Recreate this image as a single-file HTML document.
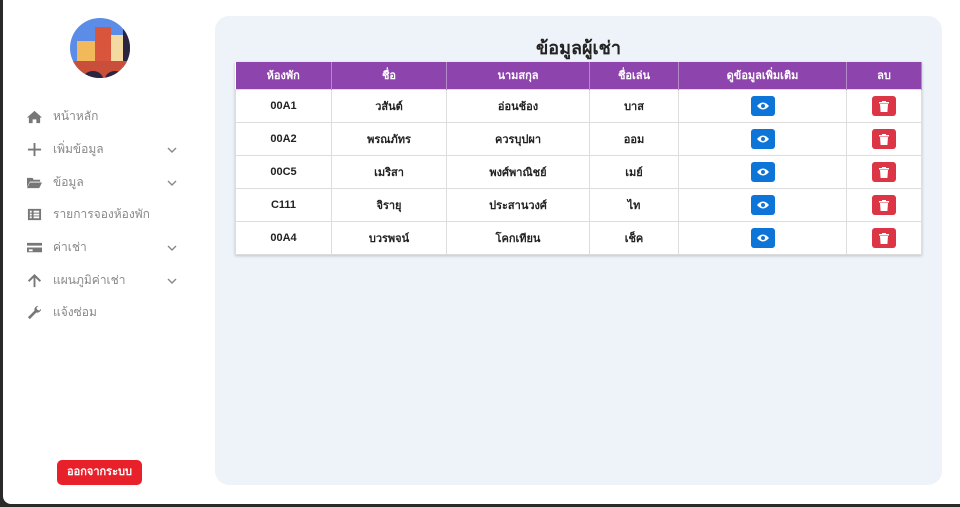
<!DOCTYPE html>
<html><head><meta charset="utf-8"><style>
*{box-sizing:border-box;margin:0;padding:0}
body{width:960px;height:507px;overflow:hidden;background:#2a2a2a;font-family:"Liberation Sans","Noto Sans CJK SC",sans-serif}
.frame{position:absolute;left:3px;top:0;width:957px;height:504px;background:#fff;border-bottom-left-radius:8px}
.item{position:absolute;left:24px;height:20px;display:flex;align-items:center;color:#888;font-size:12px}
.item svg{width:15px;height:15px;fill:#777;margin-right:11px}
.chev{position:absolute;left:164px;width:10px;height:10px}
.panel{position:absolute;left:212px;top:16px;width:727px;height:469px;background:#eef3fa;border-radius:14px}
h1{position:absolute;left:0;width:100%;top:17px;text-align:center;font-size:18px;font-weight:bold;color:#222}
table{position:absolute;left:20px;top:46px;width:687px;border-collapse:collapse;background:#fff;box-shadow:0 1px 3px rgba(0,0,0,.2);font-size:11px}
th{background:#8e44ad;color:#fff;height:27px;font-weight:bold;border-right:1px solid #b58ac9}
td{height:33px;text-align:center;border:1px solid #ddd;color:#222;font-weight:bold}
.b{display:inline-block;width:24px;height:20px;border-radius:3px;vertical-align:middle;position:relative}
.eye{background:#0d74d8}.del{background:#dc3545}
.b svg{position:absolute;left:6px;top:4px;width:12px;height:12px}
.logout{position:absolute;left:54px;top:460px;width:85px;height:25px;background:#e8202a;border-radius:5px;color:#fff;font-size:11px;font-weight:bold;text-align:center;line-height:25px}
</style></head><body><div class="frame">
<svg style="position:absolute;left:66px;top:17px" width="62" height="62" viewBox="0 0 62 62">
<defs><clipPath id="c"><circle cx="31" cy="31" r="30"/></clipPath></defs>
<g clip-path="url(#c)"><rect width="62" height="62" fill="#5b8de8"/>
<rect x="8" y="24" width="18" height="28" fill="#f2b95a"/><rect x="26" y="10" width="16" height="42" fill="#d9553c"/><rect x="42" y="18" width="14" height="34" fill="#f4d9a0"/><rect x="54" y="10" width="8" height="44" fill="#2d2540"/>
<rect x="0" y="44" width="62" height="18" fill="#c94f3a"/><path d="M14 62a10 8 0 0 1 20 0zM36 62a10 8 0 0 1 20 0z" fill="#2d2540"/></g></svg>
<div class="item" style="top:106px"><svg viewBox="0 0 16 16"><path d="M8 2L0 9h2v6h4v-4h4v4h4V9h2z"/></svg>หน้าหลัก</div>
<div class="item" style="top:139px"><svg viewBox="0 0 16 16"><path d="M7 1h2v6h6v2H9v6H7V9H1V7h6z"/></svg>เพิ่มข้อมูล</div>
<div class="item" style="top:172px"><svg viewBox="0 0 16 16"><path d="M0 3h6l1 2h7v2H3L0 13zM3 8h13l-3 6H0z"/></svg>ข้อมูล</div>
<div class="item" style="top:204px"><svg viewBox="0 0 16 16"><path d="M1 2h14v12H1zM3 4v2h2V4zm4 0v2h6V4zM3 7v2h2V7zm4 0v2h6V7zM3 10v2h2v-2zm4 0v2h6v-2z" fill-rule="evenodd"/></svg>รายการจองห้องพัก</div>
<div class="item" style="top:237px"><svg viewBox="0 0 16 16"><path d="M0 3h16v3H0zM0 8h16v5H0zm2 2v2h4v-2z" fill-rule="evenodd"/></svg>ค่าเช่า</div>
<div class="item" style="top:270px"><svg viewBox="0 0 16 16"><path d="M8 1l7 7-1.5 1.5L9 5v10H7V5L2.5 9.5 1 8z"/></svg>แผนภูมิค่าเช่า</div>
<div class="item" style="top:302px"><svg viewBox="0 0 16 16"><path d="M15 4a4 4 0 0 1-5 4L3 15 1 13l7-7a4 4 0 0 1 4-5l-2 2 1 2 2 1z"/></svg>แจ้งซ่อม</div>
<svg class="chev" style="top:145px" viewBox="0 0 10 10"><path d="M1 3l4 4 4-4" stroke="#888" stroke-width="1.4" fill="none"/></svg>
<svg class="chev" style="top:178px" viewBox="0 0 10 10"><path d="M1 3l4 4 4-4" stroke="#888" stroke-width="1.4" fill="none"/></svg>
<svg class="chev" style="top:243px" viewBox="0 0 10 10"><path d="M1 3l4 4 4-4" stroke="#888" stroke-width="1.4" fill="none"/></svg>
<svg class="chev" style="top:276px" viewBox="0 0 10 10"><path d="M1 3l4 4 4-4" stroke="#888" stroke-width="1.4" fill="none"/></svg>
<div class="logout">ออกจากระบบ</div>
<div class="panel"><h1>ข้อมูลผู้เช่า</h1>
<table><tr><th style="width:96px">ห้องพัก</th><th style="width:115px">ชื่อ</th><th style="width:143px">นามสกุล</th><th style="width:89px">ชื่อเล่น</th><th style="width:168px">ดูข้อมูลเพิ่มเติม</th><th>ลบ</th></tr>
<tr><td>00A1</td><td>วสันต์</td><td>อ่อนช้อง</td><td>บาส</td><td><span class="b eye"><svg viewBox="0 0 12 12"><path d="M0 6q6-7 12 0q-6 7-12 0z" fill="#fff"/><circle cx="6" cy="6" r="2" fill="#0d74d8"/></svg></span></td><td><span class="b del"><svg viewBox="0 0 12 12"><path d="M1 2h10v1.5H1zM4 1h4v1H4zM2 4h8l-.6 8H2.6z" fill="#fff"/></svg></span></td></tr>
<tr><td>00A2</td><td>พรณภัทร</td><td>ควรบุปผา</td><td>ออม</td><td><span class="b eye"><svg viewBox="0 0 12 12"><path d="M0 6q6-7 12 0q-6 7-12 0z" fill="#fff"/><circle cx="6" cy="6" r="2" fill="#0d74d8"/></svg></span></td><td><span class="b del"><svg viewBox="0 0 12 12"><path d="M1 2h10v1.5H1zM4 1h4v1H4zM2 4h8l-.6 8H2.6z" fill="#fff"/></svg></span></td></tr>
<tr><td>00C5</td><td>เมริสา</td><td>พงศ์พาณิชย์</td><td>เมย์</td><td><span class="b eye"><svg viewBox="0 0 12 12"><path d="M0 6q6-7 12 0q-6 7-12 0z" fill="#fff"/><circle cx="6" cy="6" r="2" fill="#0d74d8"/></svg></span></td><td><span class="b del"><svg viewBox="0 0 12 12"><path d="M1 2h10v1.5H1zM4 1h4v1H4zM2 4h8l-.6 8H2.6z" fill="#fff"/></svg></span></td></tr>
<tr><td>C111</td><td>จิรายุ</td><td>ประสานวงศ์</td><td>ไท</td><td><span class="b eye"><svg viewBox="0 0 12 12"><path d="M0 6q6-7 12 0q-6 7-12 0z" fill="#fff"/><circle cx="6" cy="6" r="2" fill="#0d74d8"/></svg></span></td><td><span class="b del"><svg viewBox="0 0 12 12"><path d="M1 2h10v1.5H1zM4 1h4v1H4zM2 4h8l-.6 8H2.6z" fill="#fff"/></svg></span></td></tr>
<tr><td>00A4</td><td>บวรพจน์</td><td>โคกเทียน</td><td>เช็ค</td><td><span class="b eye"><svg viewBox="0 0 12 12"><path d="M0 6q6-7 12 0q-6 7-12 0z" fill="#fff"/><circle cx="6" cy="6" r="2" fill="#0d74d8"/></svg></span></td><td><span class="b del"><svg viewBox="0 0 12 12"><path d="M1 2h10v1.5H1zM4 1h4v1H4zM2 4h8l-.6 8H2.6z" fill="#fff"/></svg></span></td></tr>
</table></div>
</div></body></html>
